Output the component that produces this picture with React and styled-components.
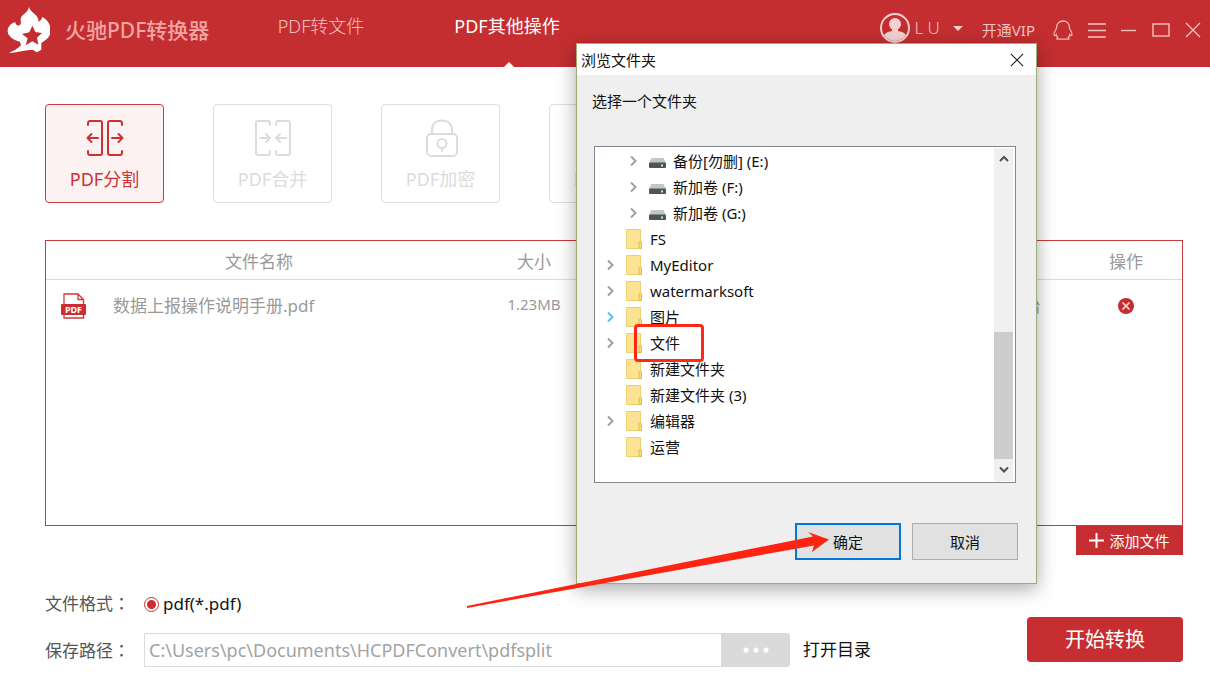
import React, { useState } from 'react'
import styled, { createGlobalStyle } from 'styled-components'

const TOOLS = [
    { id: 'split', label: 'PDF分割' },
    { id: 'merge', label: 'PDF合并' },
    { id: 'encrypt', label: 'PDF加密' },
    { id: 'decrypt', label: 'PDF解密' },
]

const FILES = [
    { name: '数据上报操作说明手册.pdf', size: '1.23MB', status: '待开始' },
]

const TREE = [
    { name: '备份[勿删] (E:)', drive: true, expandable: true },
    { name: '新加卷 (F:)', drive: true, expandable: true },
    { name: '新加卷 (G:)', drive: true, expandable: true },
    { name: 'FS' },
    { name: 'MyEditor', expandable: true },
    { name: 'watermarksoft', expandable: true },
    { name: '图片', expandable: true, hot: true },
    { name: '文件', expandable: true, marked: true },
    { name: '新建文件夹' },
    { name: '新建文件夹 (3)' },
    { name: '编辑器', expandable: true },
    { name: '运营' },
]

const Logo = () => (
    <svg width="50" height="50" viewBox="0 0 150 150" aria-hidden="true">
        <path fill="#fff" d="M87 6C91 24 117 28 116 51C121 48 125 42 127 36C142 44 154 60 152 80C150 98 136 106 124 114L124 134L110 142L98 134C76 134 50 144 26 143C42 138 54 130 63 121L60 110C38 106 22 92 23 76C24 64 34 54 46 52C46 59 52 63 58 61C68 56 58 46 64 36C70 26 84 22 87 6Z" />
        <path fill="#c42e30" d="M97 62L106 81L126 84L111 98L115 119L97 109L77 121L83 100L66 87L88 82Z" />
    </svg>
)

const AvatarIcon = () => (
    <svg width="30" height="30" viewBox="0 0 30 30" aria-hidden="true">
        <clipPath id="face"><circle cx="15" cy="15" r="13" /></clipPath>
        <circle cx="15" cy="15" r="14" fill="none" stroke="#f6d0d0" strokeWidth="2" />
        <g fill="#f6d0d0" clipPath="url(#face)">
            <circle cx="15" cy="11" r="6" />
            <path d="M12 15h6v3c6 1 9 4 9 7v5H3v-5c0-3 3-6 9-7z" />
        </g>
    </svg>
)

const QQIcon = () => (
    <svg width="20" height="20" viewBox="0 0 20 20" fill="none" stroke="#efb4b4" strokeWidth="1.3" aria-hidden="true">
        <path d="M10 1C6 1 3.6 3.8 3.6 7.4C3.6 9.5 1 11 1 14.6C1 16.2 2.4 15.6 3.2 14.6C3.4 16 4.2 16.8 4.8 17.4C3.4 18.2 3.4 19.2 5 19.2H15C16.6 19.2 16.6 18.2 15.2 17.4C15.8 16.8 16.6 16 16.8 14.6C17.6 15.6 19 16.2 19 14.6C19 11 16.4 9.5 16.4 7.4C16.4 3.8 14 1 10 1Z" />
    </svg>
)

const MenuIcon = () => (
    <svg width="18" height="16" viewBox="0 0 18 16" stroke="#f3c4c4" strokeWidth="1.4" aria-hidden="true">
        <path d="M0 2h18M0 8.500h18M0 15h18" />
    </svg>
)

const MinimizeIcon = () => (
    <svg width="16" height="14" viewBox="0 0 16 14" stroke="#f3c4c4" strokeWidth="1.4" aria-hidden="true">
        <path d="M0 7.500h15" />
    </svg>
)

const MaximizeIcon = () => (
    <svg width="18" height="14" viewBox="0 0 18 14" fill="none" stroke="#f3c4c4" strokeWidth="1.4" aria-hidden="true">
        <rect x="1" y="1" width="16" height="12" />
    </svg>
)

const CloseIcon = ({ color = '#f3c4c4', size = 16 }) => (
    <svg width={size} height={size} viewBox="0 0 16 16" stroke={color} strokeWidth="1.3" aria-hidden="true">
        <path d="M1 1l14 14M15 1L1 15" />
    </svg>
)

const ToolIcon = ({ id }) => {
    const lock = id === 'encrypt' || id === 'decrypt'
    return (
        <svg width="38" height="38" viewBox="0 0 38 38" fill="none" stroke="currentColor" strokeWidth="2" strokeLinecap="round" strokeLinejoin="round" aria-hidden="true">
            {id === 'split' && (
                <>
                    <path d="M2 6V4.500Q2 2 4 2H14Q16 2 16 4V34Q16 36 14 36H4Q2 36 2 33.500V32" />
                    <path d="M36 6V4.500Q36 2 34 2H24Q22 2 22 4V34Q22 36 24 36H34Q36 36 36 33.500V32" />
                    <path d="M12 19H1.500M5.500 15L1.500 19l4 4M26 19H36.500M32.500 15l4 4l-4 4" />
                </>
            )}
            {id === 'merge' && (
                <>
                    <path d="M16 6V4.500Q16 2 14 2H4Q2 2 2 4V34Q2 36 4 36H14Q16 36 16 33.500V32" />
                    <path d="M22 6V4.500Q22 2 24 2H34Q36 2 36 4V34Q36 36 34 36H24Q22 36 22 33.500V32" />
                    <path d="M6 19H16M12 15l4 4l-4 4M32 19H22M26 15l-4 4l4 4" />
                </>
            )}
            {lock && (
                <>
                    <path d="M10 15V11C10 5 14 1.500 20 1.500S30 5 30 11V15" />
                    <rect x="5" y="15" width="30" height="22" rx="4" />
                    <circle cx="20" cy="24.500" r="4.500" />
                    <path d="M20 29v3" />
                </>
            )}
        </svg>
    )
}

const PdfIcon = () => (
    <svg width="26" height="26" viewBox="0 0 26 26" aria-hidden="true">
        <path d="M3 12V1H17L22.500 6.500V12M17 1V6.500H22.500M3 20V25H22.500V20" fill="none" stroke="#cf3a3c" strokeWidth="1.3" />
        <rect x="0" y="11" width="25" height="11" rx="1" fill="#cc2f31" />
        <text x="12.500" y="20" fill="#fff" fontSize="9" fontWeight="700" textAnchor="middle" fontFamily="Noto Sans, sans-serif">PDF</text>
    </svg>
)

const RemoveIcon = () => (
    <svg width="16" height="16" viewBox="0 0 16 16" aria-hidden="true">
        <circle cx="8" cy="8" r="8" fill="#c32d2f" />
        <path d="M4.500 4.500l7 7M11.500 4.500l-7 7" stroke="#f8dada" strokeWidth="1.7" />
    </svg>
)

const PlusIcon = () => (
    <svg width="15" height="15" viewBox="0 0 15 15" stroke="#fff" strokeWidth="2" aria-hidden="true">
        <path d="M7.500 0v15M0 7.500h15" />
    </svg>
)

const DotsIcon = () => (
    <svg width="26" height="6" viewBox="0 0 26 6" fill="#fff" aria-hidden="true">
        <circle cx="3" cy="3" r="2.500" />
        <circle cx="13" cy="3" r="2.500" />
        <circle cx="23" cy="3" r="2.500" />
    </svg>
)

const Chevron = ({ color = '#a0a0a0' }) => (
    <svg width="8" height="12" viewBox="0 0 8 12" fill="none" stroke={color} strokeWidth="2" aria-hidden="true">
        <path d="M1 1.500L5.500 6L1 10.500" />
    </svg>
)

const FolderIcon = () => (
    <svg width="16" height="20" viewBox="0 0 16 20" aria-hidden="true">
        <path d="M.5 .5H14.500V12L15.500 13V19.500H.5Z" fill="#fce393" stroke="#efd070" />
        <path d="M13 19.500V13L14.300 12L15.500 13V19.500Z" fill="#f8d978" stroke="#e6bd4c" />
    </svg>
)

const DriveIcon = () => (
    <svg width="17" height="16" viewBox="0 0 17 16" aria-hidden="true">
        <path d="M2.500 5H14.500L17 10H0Z" fill="#c3c6c6" />
        <rect x="0" y="9.500" width="17" height="5.500" rx="1" fill="#4d5654" />
        <rect x="12" y="11.500" width="2" height="2" fill="#b9f0c0" />
    </svg>
)

const ScrollArrow = ({ down }) => (
    <svg width="10" height="8" viewBox="0 0 10 8" fill="none" stroke="#505050" strokeWidth="2" aria-hidden="true">
        <path d={down ? 'M1 1.500L5 5.500L9 1.500' : 'M1 6L5 2L9 6'} />
    </svg>
)

const BrowseDialog = ({ onClose }) => {
    return (
        <Dialog role="dialog" aria-labelledby="dialog-title">
            <DialogTitle>
                <h2 id="dialog-title">浏览文件夹</h2>
                <IconButton aria-label="关闭" onClick={onClose}>
                    <CloseIcon color="#222" size={14} />
                </IconButton>
            </DialogTitle>
            <DialogBody>
                <Prompt>选择一个文件夹</Prompt>
                <TreeBox>
                    <Tree>
                        {
                            TREE.map((node) => (
                                <TreeRow key={node.name} $nested={node.drive}>
                                    <Expander>
                                        {node.expandable && (
                                            <IconButton aria-label={`展开 ${node.name}`}>
                                                <Chevron color={node.hot ? '#4fc8ee' : undefined} />
                                            </IconButton>
                                        )}
                                    </Expander>
                                    <NodeIcon>{node.drive ? <DriveIcon /> : <FolderIcon />}</NodeIcon>
                                    <span>{node.name}</span>
                                    {node.marked && <Marker />}
                                </TreeRow>
                            ))
                        }
                    </Tree>
                    <Scrollbar>
                        <IconButton aria-label="向上滚动"><ScrollArrow /></IconButton>
                        <Track><Thumb /></Track>
                        <IconButton aria-label="向下滚动"><ScrollArrow down /></IconButton>
                    </Scrollbar>
                </TreeBox>
                <DialogActions>
                    <DialogButton $primary onClick={onClose}>确定</DialogButton>
                    <DialogButton onClick={onClose}>取消</DialogButton>
                </DialogActions>
            </DialogBody>
        </Dialog>
    )
}

const App = () => {
    const [tool, setTool] = useState('split')
    const [path, setPath] = useState('C:\\Users\\pc\\Documents\\HCPDFConvert\\pdfsplit')
    const [dialogOpen, setDialogOpen] = useState(true)

    return (
        <>
            <GlobalStyle />
            <Page>
                <Header>
                    <Brand>
                        <Logo />
                        <h1>火驰PDF转换器</h1>
                    </Brand>
                    <Tabs>
                        <Tab href="#convert">PDF转文件</Tab>
                        <Tab href="#other" $active>PDF其他操作</Tab>
                    </Tabs>
                    <Account>
                        <AvatarIcon />
                        <span>L U</span>
                        <Caret />
                    </Account>
                    <Vip>开通VIP</Vip>
                    <WindowButtons>
                        <IconButton aria-label="QQ"><QQIcon /></IconButton>
                        <IconButton aria-label="菜单"><MenuIcon /></IconButton>
                        <IconButton aria-label="最小化"><MinimizeIcon /></IconButton>
                        <IconButton aria-label="最大化"><MaximizeIcon /></IconButton>
                        <IconButton aria-label="关闭"><CloseIcon /></IconButton>
                    </WindowButtons>
                </Header>

                <Content>
                    <Tools>
                        {
                            TOOLS.map(({ id, label }) => (
                                <ToolCard key={id} $active={tool === id} onClick={() => setTool(id)}>
                                    <ToolIcon id={id} />
                                    {label}
                                </ToolCard>
                            ))
                        }
                    </Tools>

                    <FilePanel>
                        <FileTable>
                            <thead>
                                <tr>
                                    <NameHead>文件名称</NameHead>
                                    <SizeHead>大小</SizeHead>
                                    <th>状态</th>
                                    <ActionHead>操作</ActionHead>
                                </tr>
                            </thead>
                            <tbody>
                                {
                                    FILES.map((file) => (
                                        <tr key={file.name}>
                                            <td>
                                                <FileName>
                                                    <PdfIcon />
                                                    {file.name}
                                                </FileName>
                                            </td>
                                            <SizeCell>{file.size}</SizeCell>
                                            <StatusCell>{file.status}</StatusCell>
                                            <ActionCell>
                                                <IconButton aria-label="删除"><RemoveIcon /></IconButton>
                                            </ActionCell>
                                        </tr>
                                    ))
                                }
                            </tbody>
                        </FileTable>
                    </FilePanel>
                    <AddButton><PlusIcon />添加文件</AddButton>

                    <Footer>
                        <Settings>
                            <SettingRow>
                                <SettingLabel as="span">文件格式<Colon>：</Colon></SettingLabel>
                                <RadioLabel>
                                    <Radio type="radio" name="format" defaultChecked />
                                    pdf(*.pdf)
                                </RadioLabel>
                            </SettingRow>
                            <SettingRow>
                                <SettingLabel htmlFor="save-path">保存路径<Colon>：</Colon></SettingLabel>
                                <PathInput id="save-path" value={path} onChange={(e) => setPath(e.target.value)} />
                                <BrowseButton aria-label="浏览" onClick={() => setDialogOpen(true)}><DotsIcon /></BrowseButton>
                                <OpenLink href="#open">打开目录</OpenLink>
                            </SettingRow>
                        </Settings>
                        <StartButton>开始转换</StartButton>
                    </Footer>
                </Content>

                {dialogOpen && <BrowseDialog onClose={() => setDialogOpen(false)} />}

                <PointerArrow viewBox="0 0 370 84" aria-hidden="true">
                    <path d="M2 81L348 11.500L343 7L364 14.500L347 27L349 20.500L2 83Z" />
                </PointerArrow>
            </Page>
        </>
    )
}

export default App

const GlobalStyle = createGlobalStyle`
    * {
        box-sizing: border-box;
    }
    body {
        margin: 0;
        background: #fff;
    }
    body, button, input {
        font-family: "Noto Sans", "Noto Sans CJK SC", sans-serif;
    }
    button {
        padding: 0;
        border: 0;
        background: none;
        color: inherit;
        cursor: pointer;
    }
    a {
        color: inherit;
        text-decoration: none;
    }
    svg {
        display: block;
        flex: none;
    }
`

const Page = styled.div`
    position: relative;
    display: flex;
    flex-direction: column;
    min-height: 100vh;
    overflow: hidden;
`

const Header = styled.header`
    display: flex;
    height: 67px;
    padding: 0 9px 7px 0;
    align-items: center;
    background: #c42e30;
    color: #f3c4c4;
`

const Brand = styled.div`
    display: flex;
    align-items: center;
    width: 228px;
    h1 {
        margin: 0 0 0 15px;
        font-size: 21px;
        line-height: 30px;
        font-weight: 500;
        color: #f0a5a5;
        white-space: nowrap;
    }
`

const Tabs = styled.nav`
    display: flex;
    align-self: flex-start;
    flex: 1;
`

const Tab = styled.a`
    position: relative;
    width: 186px;
    height: 67px;
    padding-top: 13px;
    font-size: 18px;
    line-height: 26px;
    font-weight: ${({ $active }) => ($active ? 400 : 300)};
    text-align: center;
    color: ${({ $active }) => ($active ? '#fff' : '#f3c0c0')};
    &::after {
        content: "";
        display: ${({ $active }) => ($active ? 'block' : 'none')};
        position: absolute;
        bottom: 0;
        left: 50%;
        margin-left: -3px;
        border: 5px solid transparent;
        border-top: 0;
        border-bottom-color: #fff;
    }
`

const Account = styled.button`
    display: flex;
    align-items: center;
    gap: 4px;
    padding-bottom: 4px;
    font-size: 17px;
    line-height: 24px;
    font-weight: 300;
`

const Caret = styled.i`
    margin-left: 9px;
    border: 5px solid transparent;
    border-top-color: #f6d0d0;
    border-bottom: 0;
`

const Vip = styled.button`
    margin-left: 19px;
    font-size: 15px;
    line-height: 24px;
    font-weight: 400;
`

const WindowButtons = styled.div`
    display: flex;
    align-items: center;
    gap: 15px;
    margin-left: 18px;
`

const IconButton = styled.button`
    display: inline-flex;
    align-items: center;
    justify-content: center;
`

const Content = styled.main`
    display: flex;
    flex: 1;
    flex-direction: column;
    padding: 37px 27px 9px 45px;
`

const Tools = styled.div`
    display: flex;
    gap: 49px;
`

const ToolCard = styled.button`
    display: flex;
    flex-direction: column;
    align-items: center;
    width: 119px;
    height: 99px;
    padding-top: 14px;
    gap: 9px;
    border: 1px solid ${({ $active }) => ($active ? '#cc3a3d' : '#dedede')};
    border-radius: 4px;
    background: ${({ $active }) => ($active ? '#fdf2f2' : '#fff')};
    color: ${({ $active }) => ($active ? '#cb3235' : '#dcdcdc')};
    font-size: 18px;
    line-height: 26px;
    font-weight: 400;
`

const FilePanel = styled.section`
    flex: 1;
    margin-top: 37px;
    border: 1px solid #cc3a3d;
`

const FileTable = styled.table`
    width: 100%;
    border-collapse: collapse;
    table-layout: fixed;
    color: #999;
    font-size: 17px;
    line-height: 24px;
    th {
        height: 38px;
        padding: 5px 0 0;
        border-bottom: 1px solid #dcdcdc;
        font-weight: 400;
    }
    td {
        height: 54px;
        padding: 0;
    }
`

const NameHead = styled.th`
    width: 426px;
`

const SizeHead = styled.th`
    width: 124px;
`

const ActionHead = styled.th`
    width: 112px;
`

const FileName = styled.div`
    display: flex;
    align-items: center;
    gap: 26px;
    padding-left: 15px;
`

const SizeCell = styled.td`
    && {
        padding-bottom: 4px;
    }
    text-align: center;
    font-size: 15px;
`

const StatusCell = styled.td`
    && {
        padding-right: 30px;
    }
    text-align: right;
`

const ActionCell = styled.td`
    button {
        display: flex;
        margin: 0 auto;
    }
`

const AddButton = styled.button`
    display: flex;
    align-items: center;
    justify-content: center;
    align-self: flex-end;
    gap: 5px;
    width: 107px;
    height: 29px;
    background: #c72e31;
    color: #fff;
    font-size: 15px;
    line-height: 24px;
`

const Footer = styled.footer`
    display: flex;
    align-items: flex-end;
    gap: 156px;
    padding-top: 36px;
`

const Settings = styled.div`
    display: flex;
    flex: 1;
    flex-direction: column;
    gap: 17px;
`

const SettingRow = styled.div`
    display: flex;
    align-items: center;
    font-size: 17px;
    line-height: 24px;
    color: #111;
`

const SettingLabel = styled.label`
    width: 99px;
    color: #555;
`

/* full-width colon sits in the middle of its box */
const Colon = styled.span`
    font-family: "Noto Sans CJK TC", sans-serif;
`

const RadioLabel = styled.label`
    display: flex;
    align-items: center;
    gap: 4px;
`

const Radio = styled.input`
    appearance: none;
    width: 15px;
    height: 15px;
    margin: 2px 0 0;
    border: 1px solid #cb3235;
    border-radius: 50%;
    background: radial-gradient(circle, #cb2f32 4px, #fff 5px);
`

const PathInput = styled.input`
    flex: 1;
    min-width: 0;
    height: 34px;
    padding: 0 4px;
    border: 1px solid #dcdcdc;
    border-right: 0;
    outline: 0;
    background: #fff;
    color: #a3a3a3;
    font-size: 18px;
`

const BrowseButton = styled.button`
    display: flex;
    align-items: center;
    justify-content: center;
    width: 69px;
    height: 34px;
    border-radius: 0 3px 3px 0;
    background: #dadada;
`

const OpenLink = styled.a`
    margin-left: 13px;
`

const StartButton = styled.button`
    width: 156px;
    height: 45px;
    margin-bottom: 5px;
    border-radius: 4px;
    background: #c72e31;
    color: #fff;
    font-size: 20px;
    line-height: 28px;
`

/* floats above the main window */
const Dialog = styled.div`
    position: absolute;
    top: 43px;
    left: 576px;
    width: 461px;
    border: 1px solid #9bad72;
    background: #efefef;
    box-shadow: 0 5px 18px rgba(0, 0, 0, 0.35);
    color: #111;
    font-size: 15px;
    line-height: 24px;
`

const DialogTitle = styled.div`
    display: flex;
    align-items: center;
    justify-content: space-between;
    height: 31px;
    padding: 0 12px 0 4px;
    background: #fff;
    h2 {
        margin: 0;
        font-size: 15px;
        font-weight: 400;
    }
`

const DialogBody = styled.div`
    padding: 14px 18px 23px 15px;
`

const Prompt = styled.p`
    margin: 0 0 33px;
`

const TreeBox = styled.div`
    display: flex;
    height: 337px;
    margin: 0 2px;
    padding: 1px 2px 1px 0;
    border: 1px solid #828790;
    background: #fff;
`

const Tree = styled.ul`
    flex: 1;
    margin: 0;
    padding: 0;
    list-style: none;
`

const TreeRow = styled.li`
    position: relative;
    display: flex;
    align-items: center;
    height: 26px;
    padding-left: ${({ $nested }) => ($nested ? '31px' : '8px')};
`

const Expander = styled.span`
    display: flex;
    justify-content: center;
    width: 15px;
`

const NodeIcon = styled.span`
    width: 24px;
    padding-left: 8px;
    margin-right: 8px;
`

const Marker = styled.i`
    position: absolute;
    top: -6px;
    left: 39px;
    width: 70px;
    height: 38px;
    border: 3px solid #fe2817;
    border-radius: 4px;
    z-index: 1;
`

const Scrollbar = styled.div`
    display: flex;
    flex-direction: column;
    width: 19px;
    background: #f0f0f0;
    button {
        height: 22px;
    }
`

const Track = styled.div`
    display: flex;
    flex: 1;
    align-items: flex-end;
`

const Thumb = styled.div`
    width: 100%;
    height: 44%;
    background: #cdcdcd;
`

const DialogActions = styled.div`
    display: flex;
    justify-content: flex-end;
    gap: 11px;
    margin-top: 40px;
`

const DialogButton = styled.button`
    width: 106px;
    height: 37px;
    border: ${({ $primary }) => ($primary ? '2px solid #0078d7' : '1px solid #adadad')};
    background: #e1e1e1;
    font-size: 15px;
    line-height: 24px;
`

const PointerArrow = styled.svg`
    position: absolute;
    top: 525px;
    left: 465px;
    width: 370px;
    height: 84px;
    fill: #fe2412;
    pointer-events: none;
`
